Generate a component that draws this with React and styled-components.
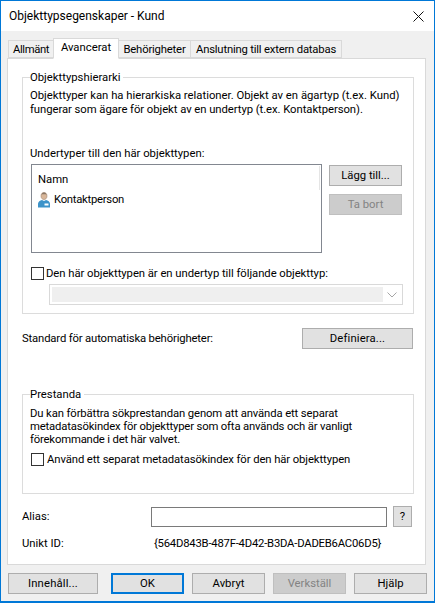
import React from "react";
import styled, { createGlobalStyle } from "styled-components";

const GlobalStyle = createGlobalStyle`
  html, body {
    margin: 0;
    padding: 0;
    background: #f0f0f0;
  }
  * {
    box-sizing: border-box;
  }
`;

const Dialog = styled.div`
  width: 435px;
  height: 603px;
  display: flex;
  flex-direction: column;
  background: #f0f0f0;
  border: 1px solid #0078d7;
  border-bottom-width: 2px;
  font-family: Roboto, "Liberation Sans", sans-serif;
  font-size: 11.3px;
  line-height: 13px;
  color: #000;
  overflow: hidden;
`;

const TitleBar = styled.div`
  height: 30px;
  flex: none;
  display: flex;
  align-items: center;
  justify-content: space-between;
  background: #fff;
  padding: 0 10px 0 8px;
  font-size: 12px;
`;

const Body = styled.div`
  flex: 1;
  display: flex;
  flex-direction: column;
  padding: 7px 8px 0 6px;
`;

const Tabs = styled.div`
  height: 20px;
  flex: none;
  display: flex;
  align-items: flex-end;
  padding-left: 2px;
  position: relative;
  z-index: 1;
`;

const Tab = styled.div`
  width: ${(p) => p.$w}px;
  height: ${(p) => (p.$active ? 21 : 18)}px;
  margin-bottom: ${(p) => (p.$active ? -1 : 0)}px;
  margin-left: -1px;
  padding-bottom: ${(p) => (p.$active ? 3 : 0)}px;
  display: flex;
  align-items: center;
  justify-content: center;
  background: ${(p) => (p.$active ? "#fff" : "#f0f0f0")};
  border: 1px solid #d9d9d9;
  border-bottom-color: ${(p) => (p.$active ? "#fff" : "#d9d9d9")};
  letter-spacing: ${(p) => p.$ls || 0}px;
  white-space: nowrap;
`;

const Panel = styled.div`
  height: 507px;
  flex: none;
  display: flex;
  flex-direction: column;
  background: #fff;
  border: 1px solid #d9d9d9;
  padding: 12px 11px 0 14px;
`;

const Group = styled.fieldset`
  height: ${(p) => p.$h}px;
  flex: none;
  margin: 0;
  padding: 0 8px 0 7px;
  border: 1px solid #dcdcdc;
  min-width: 0;
`;

const GroupTitle = styled.legend`
  padding: 0 3px 0 0;
  height: 13px;
  line-height: 13px;
`;

const Paragraph = styled.p`
  margin: ${(p) => p.$top}px 0 0;
  line-height: ${(p) => p.$lh || 13}px;
  white-space: nowrap;
`;

// Segoe UI widths differ per string, so each line gets its own tracking
const Line = styled.span`
  letter-spacing: ${(p) => p.$ls || 0}px;
  white-space: nowrap;
`;

const ListRow = styled.div`
  display: flex;
  gap: 7px;
  margin: 4px 0 0 1px;
`;

const ListBox = styled.div`
  width: 291px;
  height: 89px;
  border: 1px solid #828790;
  background: #fff;
  padding: 7px 0 0 6px;
  position: relative;
`;

const ListHeader = styled.div`
  height: 13px;
  padding-top: 1px;
`;

const ListItem = styled.div`
  display: flex;
  align-items: center;
  gap: 4px;
  margin-top: 6px;
  height: 17px;
`;

const ListScrollEdge = styled.div`
  position: absolute;
  top: 1px;
  right: 1px;
  width: 1px;
  height: 24px;
  background: #e5e5e5;
`;

const ButtonColumn = styled.div`
  display: flex;
  flex-direction: column;
  gap: 8px;
  padding-top: 1px;
`;

const Button = styled.div`
  width: ${(p) => p.$w || 73}px;
  height: 21px;
  flex: none;
  margin-left: ${(p) => p.$ml || 0}px;
  display: flex;
  align-items: center;
  justify-content: center;
  background: ${(p) => (p.$disabled ? "#cccccc" : "#e1e1e1")};
  border: ${(p) => (p.$default ? "2px solid #0078d7" : p.$disabled ? "1px solid #bfbfbf" : "1px solid #adadad")};
  color: ${(p) => (p.$disabled ? "#838383" : "#000")};
  letter-spacing: ${(p) => p.$ls || 0}px;
  white-space: nowrap;
`;

const CheckRow = styled.div`
  display: flex;
  align-items: center;
  gap: ${(p) => p.$gap}px;
  height: 13px;
  margin: ${(p) => p.$top}px 0 0 1px;
`;

const Check = styled.span`
  width: 13px;
  height: 13px;
  flex: none;
  border: 1px solid #333;
  background: #fff;
`;

const Select = styled.div`
  width: 354px;
  height: 21px;
  margin: 4px 0 0 19px;
  display: flex;
  align-items: center;
  border: 1px solid #d9d9d9;
  padding: 2px;
  background: #fff;
`;

const SelectField = styled.div`
  flex: 1;
  height: 100%;
  background: #efefef;
`;

const SelectArrow = styled.div`
  width: 17px;
  display: flex;
  justify-content: center;
`;

const SpreadRow = styled.div`
  display: flex;
  align-items: center;
  justify-content: space-between;
  height: 21px;
  margin: 14px 0 39px;
  padding-right: 1px;
`;

const FieldRow = styled.div`
  display: flex;
  align-items: center;
  height: 21px;
  margin-top: ${(p) => p.$top}px;
`;

const FieldLabel = styled.div`
  width: 129px;
  flex: none;
`;

const TextInput = styled.div`
  width: 236px;
  height: 20px;
  border: 1px solid #7a7a7a;
  background: #fff;
`;

const IdValue = styled.div`
  padding-left: 3px;
  letter-spacing: -0.22px;
  white-space: nowrap;
`;

const Footer = styled.div`
  display: flex;
  gap: 8px;
  margin: 8px 0 0 1px;
`;

const PersonIcon = () => (
  <svg width="12" height="16" viewBox="0 0 12 16">
    <path d="M3 4c0-2 1.200-3.500 3-3.500S9 2 9 4 7.800 7.500 6 7.500 3 6 3 4z" fill="#d9b79a" stroke="#a08673" strokeWidth=".6" />
    <path d="M3.400 2.800C3.800 1.200 4.800.5 6 .5s2.200.7 2.600 2.300C7.500 2.200 4.500 2.200 3.400 2.800z" fill="#8a7766" />
    <path d="M0 15.500v-3.800C0 9.800 2 8.500 4 8l2 1 2-1c2 .5 4 1.800 4 3.700v3.800z" fill="#3d93c9" />
    <rect x="6.500" y="11.500" width="4" height="2" fill="#fff" />
  </svg>
);

const CloseIcon = () => (
  <svg width="11" height="11" viewBox="0 0 11 11">
    <path d="M.5.500l10 10M10.500.5l-10 10" stroke="#111" strokeWidth="1" fill="none" />
  </svg>
);

const Chevron = () => (
  <svg width="10" height="6" viewBox="0 0 10 6">
    <path d="M.5.500L5 5 9.500.5" stroke="#a6a6a6" strokeWidth="1" fill="none" />
  </svg>
);

export default function App() {
  return (
    <>
      <GlobalStyle />
      <Dialog>
        <TitleBar>
          <span>Objekttypsegenskaper - Kund</span>
          <CloseIcon />
        </TitleBar>
        <Body>
          <Tabs>
            <Tab $w={46} $ls={-0.4}>Allmänt</Tab>
            <Tab $w={66} $active>Avancerat</Tab>
            <Tab $w={73} $ls={-0.19}>Behörigheter</Tab>
            <Tab $w={152} $ls={-0.2}>Anslutning till extern databas</Tab>
          </Tabs>
          <Panel>
            <Group $h={243}>
              <GroupTitle>Objekttypshierarki</GroupTitle>
              <Paragraph $top={5} $lh={14}>
                <Line>Objekttyper kan ha hierarkiska relationer. Objekt av en ägartyp (t.ex. Kund)</Line>
                <br />
                <Line $ls={-0.06}>fungerar som ägare för objekt av en undertyp (t.ex. Kontaktperson).</Line>
              </Paragraph>
              <Paragraph $top={30}>Undertyper till den här objekttypen:</Paragraph>
              <ListRow>
                <ListBox>
                  <ListHeader>Namn</ListHeader>
                  <ListItem>
                    <PersonIcon />
                    <Line $ls={-0.27}>Kontaktperson</Line>
                  </ListItem>
                  <ListScrollEdge />
                </ListBox>
                <ButtonColumn>
                  <Button>Lägg till...</Button>
                  <Button $disabled>Ta bort</Button>
                </ButtonColumn>
              </ListRow>
              <CheckRow $top={14} $gap={2}>
                <Check />
                <Line $ls={-0.05}>Den här objekttypen är en undertyp till följande objekttyp:</Line>
              </CheckRow>
              <Select>
                <SelectField />
                <SelectArrow>
                  <Chevron />
                </SelectArrow>
              </Select>
            </Group>
            <SpreadRow>
              <Line $ls={-0.16}>Standard för automatiska behörigheter:</Line>
              <Button $w={111} $ls={0.14}>Definiera...</Button>
            </SpreadRow>
            <Group $h={106}>
              <GroupTitle>Prestanda</GroupTitle>
              <Paragraph $top={6}>
                <Line $ls={-0.12}>Du kan förbättra sökprestandan genom att använda ett separat</Line>
                <br />
                <Line $ls={-0.16}>metadatasökindex för objekttyper som ofta används och är vanligt</Line>
                <br />
                <Line $ls={-0.18}>förekommande i det här valvet.</Line>
              </Paragraph>
              <CheckRow $top={7} $gap={3}>
                <Check />
                <Line $ls={-0.1}>Använd ett separat metadatasökindex för den här objekttypen</Line>
              </CheckRow>
            </Group>
            <FieldRow $top={12}>
              <FieldLabel>Alias:</FieldLabel>
              <TextInput />
              <Button $w={19} $ml={6}>?</Button>
            </FieldRow>
            <FieldRow $top={6}>
              <FieldLabel>Unikt ID:</FieldLabel>
              <IdValue>{"{564D843B-487F-4D42-B3DA-DADEB6AC06D5}"}</IdValue>
            </FieldRow>
          </Panel>
          <Footer>
            <Button $w={90} $ls={0.15}>Innehåll...</Button>
            <Button $default $ml={5}>OK</Button>
            <Button>Avbryt</Button>
            <Button $disabled>Verkställ</Button>
            <Button>Hjälp</Button>
          </Footer>
        </Body>
      </Dialog>
    </>
  );
}
